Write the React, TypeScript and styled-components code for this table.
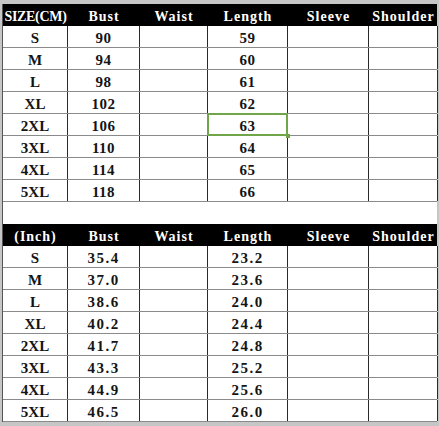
import React from 'react'
import styled, { createGlobalStyle } from 'styled-components'

const GlobalStyle = createGlobalStyle`
  html, body {
    margin: 0;
    padding: 0;
    background: #c6c6c6;
  }
  body {
    width: 439px;
    height: 426px;
    overflow: hidden;
  }
`

const COLS = '65px 72px 68px 80px 81px 69px'

const Sheet = styled.div`
  margin: 4px 0 0 2px;
  width: 435px;
  background: #fff;
  border-left: 1px solid #555;
  box-sizing: border-box;
  font-family: 'Liberation Serif', 'Times New Roman', serif;
  font-weight: bold;
  color: #141414;
`

const HeadRow = styled.div`
  display: grid;
  grid-template-columns: ${COLS};
  height: 22px;
  background: #000;
  color: #fff;
  font-size: 14px;
`

const HeadCell = styled.div<{ $tight?: boolean }>`
  display: flex;
  align-items: center;
  justify-content: center;
  padding-top: 4px;
  white-space: nowrap;
  letter-spacing: ${p => (p.$tight ? '-0.3px' : '1px')};
`

const Row = styled.div`
  display: grid;
  grid-template-columns: ${COLS};
  height: 22px;
  box-sizing: border-box;
  border-bottom: 1px solid #8a8a8a;
`

const Cell = styled.div<{ $selected?: boolean; $spaced?: boolean }>`
  position: relative;
  display: flex;
  align-items: center;
  justify-content: center;
  padding-top: 3px;
  border-right: 1px solid #2a2a2a;
  font-size: 15px;
  letter-spacing: ${p => (p.$spaced ? '1.5px' : '0.5px')};
  white-space: nowrap;

  ${p =>
    p.$selected &&
    `
    &::after {
      content: '';
      position: absolute;
      left: -1px;
      top: -1px;
      right: -1px;
      bottom: -1px;
      border: 2px solid #6fa64a;
    }
    &::before {
      content: '';
      position: absolute;
      right: -3px;
      bottom: -3px;
      width: 4px;
      height: 4px;
      background: #6fa64a;
      z-index: 1;
    }
  `}
`

const SizeCell = styled(Cell)`
  font-size: 15px;
  letter-spacing: 0;
`

const Spacer = styled.div`
  height: 22px;
`

const headers = ['Bust', 'Waist', 'Length', 'Sleeve', 'Shoulder']
const sizes = ['S', 'M', 'L', 'XL', '2XL', '3XL', '4XL', '5XL']

const cm = [
  [90, 59],
  [94, 60],
  [98, 61],
  [102, 62],
  [106, 63],
  [110, 64],
  [114, 65],
  [118, 66],
]

const inch = [
  ['35.4', '23.2'],
  ['37.0', '23.6'],
  ['38.6', '24.0'],
  ['40.2', '24.4'],
  ['41.7', '24.8'],
  ['43.3', '25.2'],
  ['44.9', '25.6'],
  ['46.5', '26.0'],
]

type TableProps = {
  title: string
  tightTitle?: boolean
  rows: (string | number)[][]
  spaced?: boolean
  selectedRow?: number
}

const SizeTable: React.FC<TableProps> = ({ title, tightTitle, rows, spaced, selectedRow }) => (
  <>
    <HeadRow>
      <HeadCell $tight={tightTitle}>{title}</HeadCell>
      {headers.map(h => (
        <HeadCell key={h}>{h}</HeadCell>
      ))}
    </HeadRow>
    {rows.map(([bust, length], i) => (
      <Row key={sizes[i]}>
        <SizeCell>{sizes[i]}</SizeCell>
        <Cell $spaced={spaced}>{bust}</Cell>
        <Cell />
        <Cell $spaced={spaced} $selected={selectedRow === i}>{length}</Cell>
        <Cell />
        <Cell />
      </Row>
    ))}
  </>
)

const App: React.FC = () => (
  <>
    <GlobalStyle />
    <Sheet>
      <SizeTable title="SIZE(CM)" tightTitle rows={cm} selectedRow={4} />
      <Spacer />
      <SizeTable title="(Inch)" rows={inch} spaced />
    </Sheet>
  </>
)

export default App
